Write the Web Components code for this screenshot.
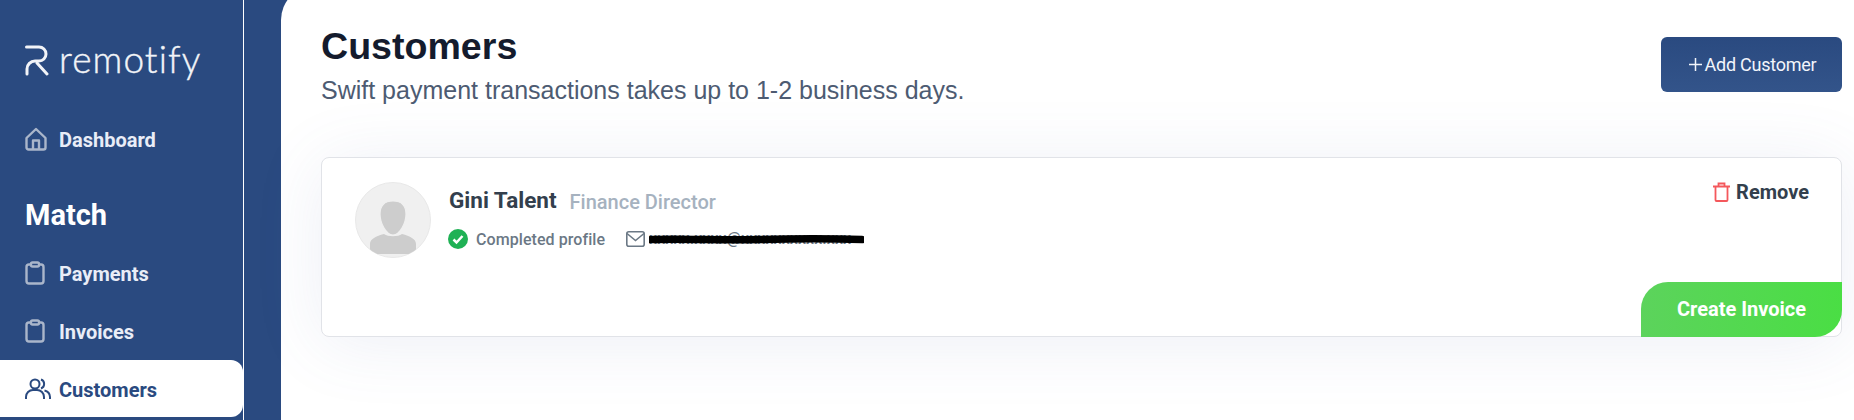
<!DOCTYPE html>
<html lang="en"><head><meta charset="utf-8"><title>Customers</title>
<style>
html,body{margin:0;height:420px;overflow:hidden;background:#2a4a80;font-family:Roboto,"Liberation Sans",sans-serif}
</style></head><body>
<app-shell>
  <side-nav slot="nav">
    <brand-logo></brand-logo>
    <nav-item icon="home" style="margin-top:32px">Dashboard</nav-item>
    <nav-heading>Match</nav-heading>
    <nav-item icon="clip">Payments</nav-item>
    <nav-item icon="clip">Invoices</nav-item>
    <nav-item icon="users" active>Customers</nav-item>
  </side-nav>
  <page-header title="Customers" sub="Swift payment transactions takes up to 1-2 business days."><add-button>Add Customer</add-button></page-header>
  <customer-card name="Gini Talent" role="Finance Director"></customer-card>
</app-shell>
<script>
const def=(n,html,setup)=>customElements.define(n,class extends HTMLElement{
  constructor(){super();this.attachShadow({mode:'open'}).innerHTML=html;}
  connectedCallback(){setup&&setup(this,this.shadowRoot);}
});
def('app-shell',`<style>
:host{display:flex;height:420px;background:#2a4a80;overflow:hidden}
.nav{flex:0 0 243px;border-right:1px solid #fff;height:420px}
.gut{flex:0 0 37px}
main{flex:1;background:#fff;border-top-left-radius:34px;margin-top:-14px;padding:14px 12px 0 40px;min-width:0}
</style><div class="nav"><slot name="nav"></slot></div><div class="gut"></div><main><slot></slot></main>`);
def('side-nav',`<style>:host{display:flex;flex-direction:column;height:100%;padding-top:42px;box-sizing:border-box}</style><slot></slot>`);
def('brand-logo',`<style>
:host{display:flex;align-items:center;gap:10px;padding-left:25px;height:36px;color:#f2f4f8}
span{font:300 37px/36px Lato,Roboto,sans-serif;letter-spacing:1.100px;position:relative;top:-1px;-webkit-text-stroke:.4px #f2f4f8}
svg{flex:none}
</style><svg width="24" height="32" viewBox="0 0 24 32" fill="none" stroke="#f2f4f8" stroke-width="3" stroke-linecap="round"><path d="M1.500 3h12.500a7 7 0 0 1 0 14H10a8 8 0 0 0-8 8v5"/><path d="M12 19l10 11"/></svg><span>remotify</span>`);
const icons={
home:`<svg width="22" height="24" viewBox="0 0 22 24" fill="none" stroke="#aab6ca" stroke-width="2.400" stroke-linejoin="round"><path d="M1.500 11L11 2l9.500 9v9.500a2 2 0 0 1-2 2h-15a2 2 0 0 1-2-2z"/><path d="M8 22.500V13.500h6v9"/></svg>`,
clip:`<svg width="20" height="24" viewBox="0 0 20 24" fill="none" stroke="#aab6ca" stroke-width="2.400"><rect x="1.500" y="3.500" width="17" height="19" rx="2.500"/><rect x="6" y="1.500" width="8" height="4" rx="1.500" fill="#2a4a80"/></svg>`,
users:`<svg width="26" height="24" viewBox="0 0 26 24" fill="none" stroke="#2a4a80" stroke-width="2"><circle cx="10" cy="7" r="4.500"/><path d="M1 22v-2a7 7 0 0 1 7-7h4a7 7 0 0 1 7 7v2"/><path d="M16 2.500a4.800 4.800 0 0 1 0 9"/><path d="M19.500 13.500a7 7 0 0 1 5.500 6.500v2"/></svg>`};
def('nav-item',`<style>
:host{display:flex;align-items:center;height:57px;padding-left:25px;margin-bottom:1px;color:#e9edf7;font:700 20px Roboto,sans-serif}
:host([active]){background:#fff;color:#2a4a80;border-radius:0 12px 12px 0}
.i{width:34px;display:flex;align-items:center}
.t{padding-top:2px}
</style><span class="i"></span><span class="t"><slot></slot></span>`,(h,s)=>{s.querySelector('.i').innerHTML=icons[h.getAttribute('icon')];});
def('nav-heading',`<style>:host{display:flex;align-items:center;height:48px;margin-top:23px;margin-bottom:5px;padding-left:25px;color:#fff;font:700 29px Roboto,sans-serif}</style><slot></slot>`);
def('page-header',`<style>
:host{display:flex;justify-content:space-between;align-items:flex-start;height:157px;box-sizing:border-box}
h1{margin:24px 0 0;font:700 37.600px/44px "Liberation Sans",Arial,sans-serif;color:#141b2d}
p{margin:7px 0 0;font:400 25px/30px "Liberation Sans",Arial,sans-serif;color:#4d5b72}
.a{padding-top:37px}
</style><div><h1></h1><p></p></div><div class="a"><slot></slot></div>`,(h,s)=>{s.querySelector('h1').textContent=h.getAttribute('title');s.querySelector('p').textContent=h.getAttribute('sub');});
def('add-button',`<style>
:host{display:flex;align-items:center;justify-content:center;gap:3px;width:181px;height:55px;box-sizing:border-box;border-radius:6px;background:linear-gradient(#2a4a80,#33548a);color:#f2f5fb;font:400 18px Roboto,sans-serif;letter-spacing:-.25px}
svg{margin-left:2px}
</style><svg width="13" height="13" viewBox="0 0 13 13" stroke="#f2f5fb" stroke-width="1.500"><path d="M6.500 0v13M0 6.500h13"/></svg><slot></slot>`);
def('user-avatar',`<style>:host{display:block;width:76px;height:76px;flex:none}</style>
<svg width="76" height="76" viewBox="0 0 76 76"><defs><clipPath id="c"><circle cx="38" cy="38" r="37.500"/></clipPath></defs><circle cx="38" cy="38" r="37.500" fill="#f0f0f0" stroke="#e8e8e8"/><g clip-path="url(#c)" fill="#cdcdcd"><path d="M15 72V62c0-5 6-8 14-10 4 3 14 3 18 0 8 2 14 5 14 10v10z"/><path d="M38 19c-9 0-13 5-13 13 0 9 6 21 13 21s13-12 13-21c0-8-4-13-13-13z" stroke="#f0f0f0" stroke-width="1.200"/></g></svg>`);
def('customer-card',`<style>
:host{display:flex;flex-direction:column;height:180px;box-sizing:border-box;background:#fff;border:1px solid #e1e3e8;border-radius:8px;box-shadow:0 6px 70px rgba(90,110,170,.11)}
.top{display:flex;flex:1;padding:24px 32px 0 33px;gap:18px;min-height:0}
.info{flex:1;padding-top:1px}
.n{display:flex;align-items:baseline;gap:13px;height:34px}
b{font:700 22.500px/34px Roboto,sans-serif;color:#333f4d}
.r{font:500 20px/34px Roboto,sans-serif;color:#a6b2bf;position:relative;top:1px}
.m{display:flex;align-items:center;height:24px;margin-top:10px;font:500 16px Roboto,sans-serif;color:#6b7885;letter-spacing:.07px}
.m svg{flex:none}
.p{margin-left:8px}
.mail{margin-left:21px}
.e{margin-left:4px;width:215px;height:22px;position:relative;color:#6b7885;white-space:nowrap;overflow:hidden;line-height:22px}
.e svg{position:absolute;left:0;top:0}
.rm{display:flex;align-items:center;gap:6px;height:24px;margin-top:-2px;font:700 20px Roboto,sans-serif;color:#333f4d}
.go{align-self:flex-end;margin:0 -1px -1px 0;width:201px;height:55px;padding-bottom:2px;box-sizing:border-box;display:flex;align-items:center;justify-content:center;background:linear-gradient(90deg,#5cd35c,#4ade44);border-radius:27px 0 27px 0;color:#fff;font:700 20px Roboto,sans-serif}
</style>
<div class="top"><user-avatar></user-avatar>
<div class="info"><div class="n"><b></b><span class="r"></span></div>
<div class="m"><svg width="20" height="20" viewBox="0 0 20 20" style="margin-left:-1px"><circle cx="10" cy="10" r="10" fill="#1fb155"/><path d="M5.500 10.500l3 3 6-6.500" fill="none" stroke="#fff" stroke-width="2.500"/></svg><span class="p">Completed profile</span>
<svg class="mail" width="19" height="16" viewBox="0 0 19 16" fill="none" stroke="#6b7885" stroke-width="1.600"><rect x=".8" y=".8" width="17.400" height="14.400" rx="2"/><path d="M1 2.500l8.500 7 8.500-7"/></svg>
<span class="e">xxxxx.xxxx@xxxxxxxxxx.xxx<svg width="215" height="22" viewBox="0 0 215 22"><path d="M2 11.500C40 10.500 70 12.500 110 11.500S180 10.500 213 11.500" fill="none" stroke="#000" stroke-width="7.500" stroke-linecap="round"/></svg></span></div></div>
<div class="rm"><svg width="17" height="20" viewBox="0 0 17 20" fill="none" stroke="#f4585c" stroke-width="1.800"><path d="M0 4.500h17M5.500 4.500V1.500h6v3M2.500 4.500v13.500a1 1 0 0 0 1 1h10a1 1 0 0 0 1-1V4.500"/></svg>Remove</div></div>
<div class="go">Create Invoice</div>`,(h,s)=>{s.querySelector('b').textContent=h.getAttribute('name');s.querySelector('.r').textContent=h.getAttribute('role');});
</script>
</body></html>
